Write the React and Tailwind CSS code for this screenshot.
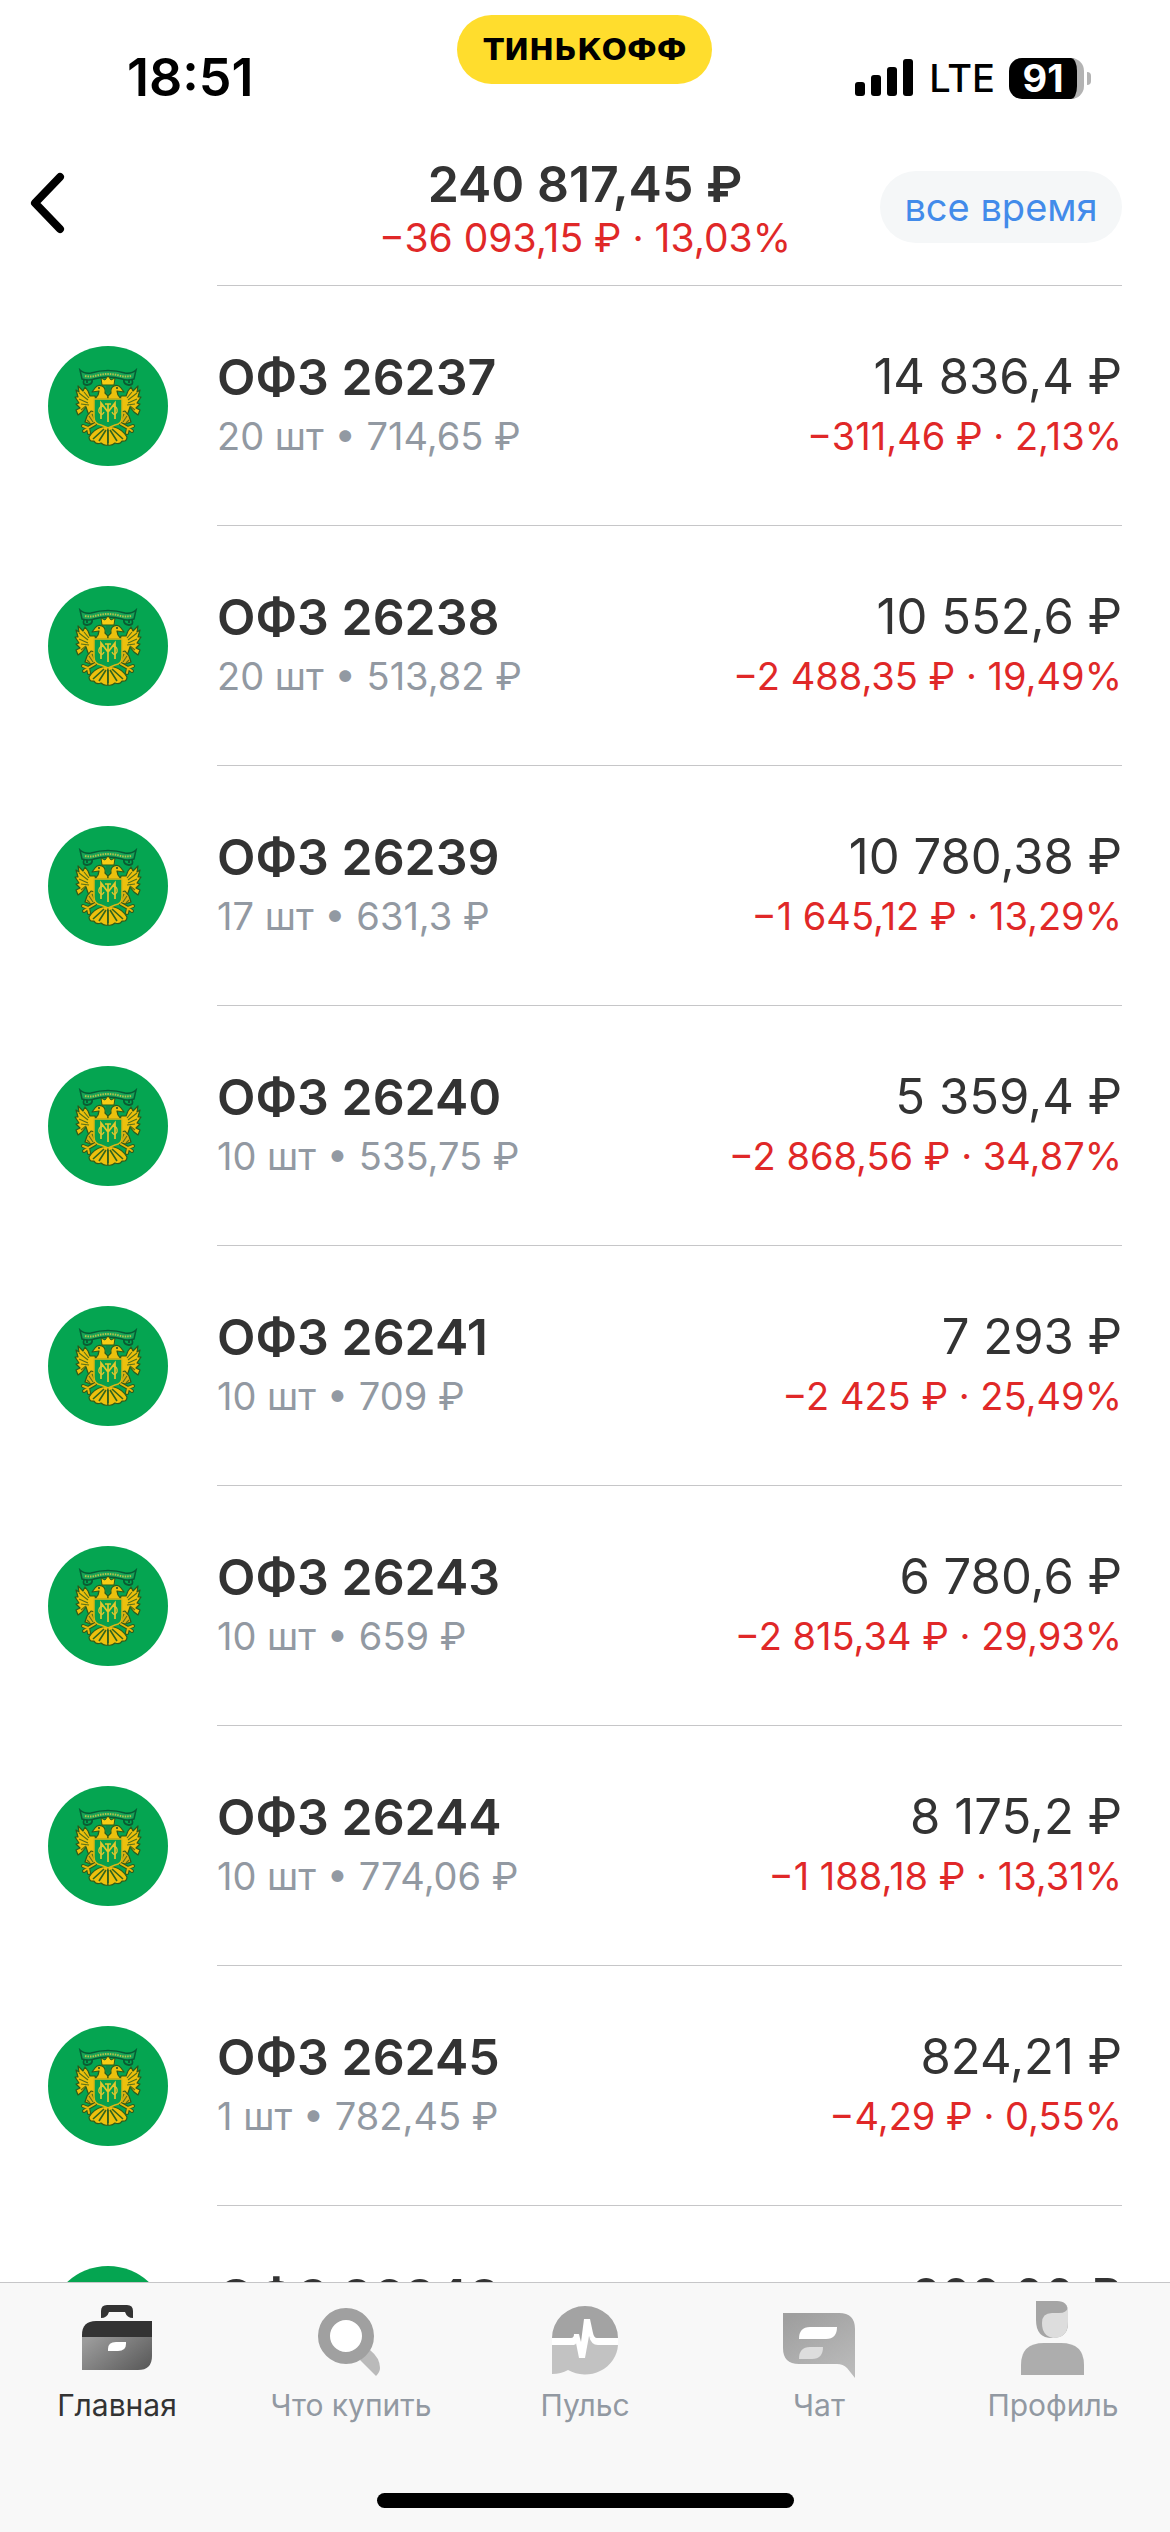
import { useState } from "react";

const bonds = [
  { name: "ОФЗ 26237", info: "20 шт • 714,65 ₽", total: "14 836,4 ₽", change: "−311,46 ₽ · 2,13%" },
  { name: "ОФЗ 26238", info: "20 шт • 513,82 ₽", total: "10 552,6 ₽", change: "−2 488,35 ₽ · 19,49%" },
  { name: "ОФЗ 26239", info: "17 шт • 631,3 ₽", total: "10 780,38 ₽", change: "−1 645,12 ₽ · 13,29%" },
  { name: "ОФЗ 26240", info: "10 шт • 535,75 ₽", total: "5 359,4 ₽", change: "−2 868,56 ₽ · 34,87%" },
  { name: "ОФЗ 26241", info: "10 шт • 709 ₽", total: "7 293 ₽", change: "−2 425 ₽ · 25,49%" },
  { name: "ОФЗ 26243", info: "10 шт • 659 ₽", total: "6 780,6 ₽", change: "−2 815,34 ₽ · 29,93%" },
  { name: "ОФЗ 26244", info: "10 шт • 774,06 ₽", total: "8 175,2 ₽", change: "−1 188,18 ₽ · 13,31%" },
  { name: "ОФЗ 26245", info: "1 шт • 782,45 ₽", total: "824,21 ₽", change: "−4,29 ₽ · 0,55%" },
  { name: "ОФЗ 26248", info: "", total: "829,66 ₽", change: "" },
];

// one half of the eagle, drawn twice with the second copy mirrored
function EagleHalf() {
  return (
    <g strokeLinejoin="round">
      <path
        d="M48 54 L47 50 L42 50 L40 45 L37 41 L35 45 L30 40 L31 46 L28 44 L30 51 L27 51 L31 57 L28 58 L32 62 L28 64 L30 69 L34 66 L38 61 L40 67 L43 68 L48 66 Z"
        fill="#ecc00d"
        stroke="#2c5a1b"
        strokeWidth="1.2"
      />
      <path d="M31 47 L40 54 M31 53 L40 57 M33 58 L41 59 M36 46 L41 52 M33 64 L38 60" fill="none" stroke="#54701a" strokeWidth="1.1" />
      <path
        d="M60 53 L47 53 L50 49 L51 45 L44 46 L47 42 Q50 38 54 40 Q58 42 57 47 L60 50 Z"
        fill="#ecc00d"
        stroke="#2c5a1b"
        strokeWidth="1.2"
      />
      <circle cx="51" cy="42" r="1" fill="#1c4c20" />
      <path d="M43 65 L47 66 L49 77 L43 78 L37 76 L39 70 Z" fill="#d9b010" stroke="#2c5a1b" strokeWidth="1.2" />
      <path d="M41 70 L45 76 M44 68 L47 74 M39 74 L42 77" fill="none" stroke="#54701a" strokeWidth="1.1" />
      <path d="M47 78 L40 82 L35 80 M40 82 L41 87 M40 82 L36 85" fill="none" stroke="#2c5a1b" strokeWidth="4" strokeLinecap="round" />
      <path d="M47 78 L40 82 L35 80 M40 82 L41 87 M40 82 L36 85" fill="none" stroke="#e2b80e" strokeWidth="2" strokeLinecap="round" />
      <path
        d="M60 80 L54 81 Q46 83 41 91 Q41 96 46 95 Q48 99 53 97 Q56 100 60 99 Z"
        fill="#ecc00d"
        stroke="#2c5a1b"
        strokeWidth="1.2"
      />
      <path d="M56 83 L45 93 M58 84 L51 95 M60 84 V97" fill="none" stroke="#31651d" strokeWidth="1.6" />
      <path d="M36 34 Q34 39 39 39 Q45 38 44 34 M39 34 V37" fill="none" stroke="#0b5a32" strokeWidth="1.8" />
    </g>
  );
}

function Emblem() {
  return (
    <svg viewBox="0 0 120 120" className="size-[120px] shrink-0" aria-hidden="true">
      <circle cx="60" cy="60" r="60" fill="#05a551" />
      <path
        d="M32 24 Q36 28 43 27 Q60 22 77 27 Q84 28 88 24 L86 33 Q79 35 74 33 Q60 29 46 33 Q41 35 34 33 Z"
        fill="#18a456"
        stroke="#075c34"
        strokeWidth="1.5"
      />
      <path d="M37 30 Q42 31 47 30 Q60 26 73 30 Q78 31 83 30" fill="none" stroke="#b6c24c" strokeWidth="2" strokeDasharray="1.5 1" />
      <EagleHalf />
      <g transform="translate(120 0) scale(-1 1)">
        <EagleHalf />
      </g>
      <path d="M57 45 L60 48 L63 45 L62 40 H58 Z" fill="#0f8a45" />
      <path d="M54 39 L53 32 L57 34 L60 30 L63 34 L67 32 L66 39 Z" fill="#f5cd14" stroke="#2c5a1b" strokeWidth="1" />
      <path d="M46 53 H74 V71 Q74 78 67 79 L60 82 L53 79 Q46 78 46 71 Z" fill="#07a04d" stroke="#dcb714" strokeWidth="1.5" />
      <path d="M53 73 V57 L60 66 L67 57 V73 M60 58 V76 M57 58 H63" fill="none" stroke="#e2c62c" strokeWidth="1.7" />
      <path d="M55 60 Q50 61 51 66 Q54 71 56 66 M65 60 Q70 61 69 66 Q66 71 64 66" fill="none" stroke="#e2c62c" strokeWidth="1.3" />
    </svg>
  );
}

function HomeIcon() {
  return (
    <svg viewBox="0 0 72 76" className="h-[76px] w-[72px] overflow-visible" aria-hidden="true">
      <defs>
        <linearGradient id="case" x1="0" y1="0.2" x2="1" y2="0.8">
          <stop offset="0" stopColor="#9b9b9b" />
          <stop offset="1" stopColor="#5c5c5c" />
        </linearGradient>
      </defs>
      <path d="M20 15 V8 Q20 2 26 2 H46 Q52 2 52 8 V15 Q46 15 44 9 H28 Q26 15 20 15 Z" fill="#333" />
      <path d="M1 34 V32 Q1 18 15 18 H71 V34 Z" fill="#333" />
      <path d="M1 34 H71 V53 Q71 67 57 67 H1 Z" fill="url(#case)" />
      <path d="M27 48 V46 Q27 39 35 39 H45 V41 Q45 48 37 48 Z" fill="#fff" />
    </svg>
  );
}

function SearchIcon() {
  return (
    <svg viewBox="0 0 72 76" className="h-[76px] w-[72px] overflow-visible" aria-hidden="true">
      <path d="M45 57 L55 47 Q65 55 65 65 Q65 69 61 73 Z" fill="#bababa" />
      <circle cx="31" cy="33" r="22" fill="#fff" stroke="#a0a0a0" strokeWidth="12" />
    </svg>
  );
}

function PulseIcon() {
  return (
    <svg viewBox="0 0 72 76" className="h-[76px] w-[72px] overflow-visible" aria-hidden="true">
      <path d="M3 35 H69 V42 H3 Z M22 38 L25 31 H29 L32 39 L35 16 H41 L44 30 L48 38 L40 33 L36 55 H30 Z" fill="#fff" />
      <path d="M3 35 A33 32 0 0 1 69 35 H48 Q45 35 44 30 L41 16 H35 L32 39 L30 31 H25 Q25 35 22 35 Z" fill="#a3a3a3" />
      <path d="M3 42 H23 Q27 42 27 40 L30 55 H36 L40 33 Q42 42 49 42 H69 A33 31 0 0 1 19 67 Q12 71 3 71 Z" fill="#c2c2c2" />
    </svg>
  );
}

function ChatIcon() {
  return (
    <svg viewBox="0 0 72 76" className="h-[76px] w-[72px] overflow-visible" aria-hidden="true">
      <defs>
        <linearGradient id="bubble" x1="0.2" y1="0" x2="0.8" y2="1">
          <stop offset="0" stopColor="#9f9f9f" />
          <stop offset="1" stopColor="#bbb" />
        </linearGradient>
      </defs>
      <path d="M0 10 H56 Q72 10 72 26 V75 L64 65 Q60 61 54 61 H16 Q0 61 0 45 Z" fill="url(#bubble)" />
      <path d="M16 36 Q16 24 27 24 H54 Q54 36 43 36 Z" fill="#fff" />
      <path d="M16 57 Q16 45 27 45 H40 Q40 57 29 57 Z" fill="#ddd" transform="translate(0 -1)" />
    </svg>
  );
}

function ProfileIcon() {
  return (
    <svg viewBox="0 0 72 76" className="h-[76px] w-[72px] overflow-visible" aria-hidden="true">
      <path d="M19 -2 H40 Q51 -2 51 9 V20 Q51 35 35 35 Q19 35 19 17 Z" fill="#a5a5a5" />
      <path d="M25 20 Q25 10 35 10 H42 Q50 10 51 4 V19 Q51 35 36 35 Q25 33 25 20 Z" fill="#ddd" />
      <path d="M4 72 V62 Q4 40 27 40 H44 Q67 40 67 62 V72 Z" fill="#adadad" />
    </svg>
  );
}

const tabs = [
  { label: "Главная", Icon: HomeIcon },
  { label: "Что купить", Icon: SearchIcon },
  { label: "Пульс", Icon: PulseIcon },
  { label: "Чат", Icon: ChatIcon },
  { label: "Профиль", Icon: ProfileIcon },
];

function StatusBar() {
  return (
    <div className="grid h-[140px] grid-cols-3 px-[79px] text-black">
      <div className="flex items-start pt-[48px] pl-[48px] text-[52px] leading-[60px] font-semibold">18:51</div>
      <div className="flex items-start justify-center pt-[15px]">
        <span className="flex h-[69px] w-[255px] items-center justify-center rounded-full bg-[#ffdd2d] font-['DejaVu_Sans'] text-[30px] font-bold">
          ТИНЬКОФФ
        </span>
      </div>
      <div className="flex items-start justify-end gap-[14px] pt-[48px]">
        <svg viewBox="0 0 60 60" className="size-[60px]" aria-hidden="true">
          <rect x="0" y="34" width="10" height="14" rx="3" />
          <rect x="16" y="27" width="10" height="21" rx="3" />
          <rect x="32" y="19" width="10" height="29" rx="3" />
          <rect x="48" y="11" width="10" height="37" rx="3" />
        </svg>
        <span className="text-[38px] leading-[60px] font-medium">LTE</span>
        <div className="flex h-[60px] items-center">
          <span className="flex h-[41px] w-[75px] items-center justify-center rounded-[13px] border-r-[7px] border-[#b3b3b3] bg-black text-[38px] font-bold text-white">
            91
          </span>
          <span className="ml-[3px] h-[13px] w-[4px] rounded-r-full bg-[#b3b3b3]" />
        </div>
      </div>
    </div>
  );
}

function Header() {
  return (
    <header className="grid h-[145px] grid-cols-[270px_1fr_270px] px-[24px]">
      <button type="button" aria-label="Назад" className="flex items-start pt-[29px]">
        <svg viewBox="0 0 48 68" className="h-[68px] w-[48px]" aria-hidden="true">
          <path d="M36 8 L11 34 L36 60" fill="none" stroke="#000" strokeWidth="8" strokeLinecap="round" strokeLinejoin="round" />
        </svg>
      </button>
      <div className="pt-[14px] text-center whitespace-nowrap">
        <h1 className="text-[50px] leading-[60px] font-semibold">240 817,45 ₽</h1>
        <p className="text-[39px] leading-[48px] text-[#e02828]">−36 093,15 ₽ · 13,03%</p>
      </div>
      <div className="flex items-start justify-end pt-[31px] pr-[24px]">
        <button type="button" className="h-[72px] w-[242px] rounded-full bg-[#f5f7f8] text-[38px] whitespace-nowrap text-[#428bea]">
          все время
        </button>
      </div>
    </header>
  );
}

function BondRow({ name, info, total, change }) {
  return (
    <li className="flex h-[240px] shrink-0 gap-[49px] px-[48px]">
      <div className="pt-[61px]">
        <Emblem />
      </div>
      <div className="flex flex-1 justify-between border-t border-[#c6c6c8] pt-[60px] whitespace-nowrap">
        <div>
          <h2 className="text-[50px] leading-[62px] font-semibold">{name}</h2>
          <p className="text-[38px] leading-[56px] text-[#9299a2]">{info}</p>
        </div>
        <div className="text-right">
          <p className="text-[49px] leading-[62px]">{total}</p>
          <p className="text-[38px] leading-[56px] text-[#e02828]">{change}</p>
        </div>
      </div>
    </li>
  );
}

export default function App() {
  const [active, setActive] = useState("Главная");

  return (
    <div className="flex h-screen flex-col overflow-hidden bg-white font-['Inter',sans-serif] text-[#333]">
      <StatusBar />
      <Header />
      <ul className="flex min-h-0 flex-1 flex-col overflow-hidden">
        {bonds.map((bond) => (
          <BondRow key={bond.name} {...bond} />
        ))}
      </ul>
      <nav className="flex h-[250px] shrink-0 flex-col items-center justify-between border-t border-[#c6c6c8] bg-[#f8f8f8] pb-[24px]">
        <div className="grid w-full grid-cols-5 pt-[20px]">
          {tabs.map(({ label, Icon }) => (
            <button
              key={label}
              type="button"
              onClick={() => setActive(label)}
              className="flex flex-col items-center gap-[6px]"
            >
              <Icon />
              <span className={`text-[30px] leading-[40px] ${active === label ? "text-[#333]" : "text-[#9299a2]"}`}>
                {label}
              </span>
            </button>
          ))}
        </div>
        <div className="h-[15px] w-[417px] rounded-full bg-black" />
      </nav>
    </div>
  );
}
